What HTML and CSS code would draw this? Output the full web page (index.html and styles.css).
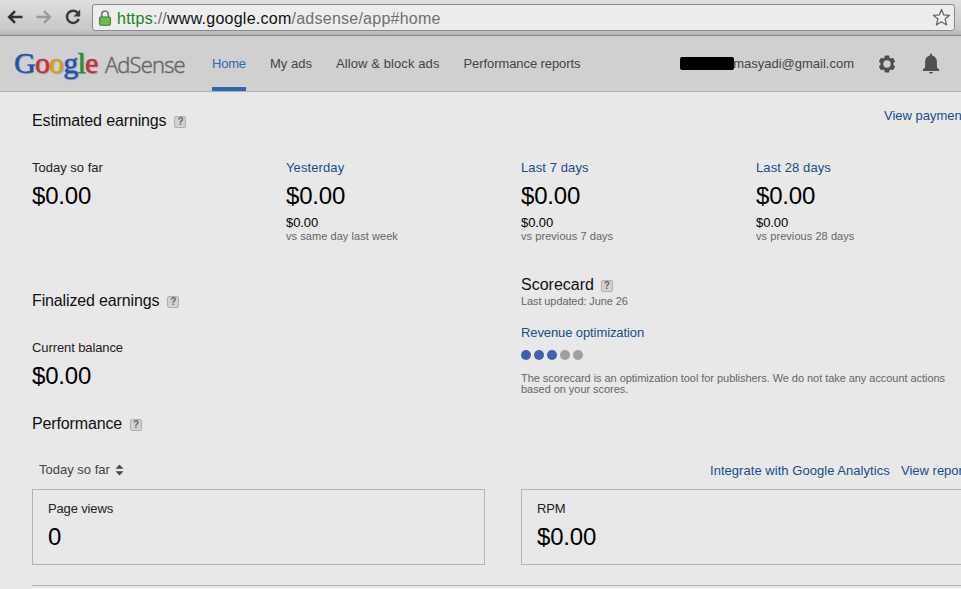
FILE: index.html
```html
<!DOCTYPE html>
<html lang="en">
<head>
<meta charset="utf-8">
<title>Google AdSense</title>
<link rel="stylesheet" href="styles.css">
</head>
<body>
<div class="toolbar">
  <svg class="nav-icon" width="16" height="16" viewBox="0 0 16 16"><path d="M15.500 8H2.500M8 2.200 2.200 8 8 13.800" fill="none" stroke="#333" stroke-width="2.600"/></svg>
  <svg class="nav-icon" width="16" height="16" viewBox="0 0 16 16"><path d="M.5 8h13M8 2.200 13.800 8 8 13.800" fill="none" stroke="#999" stroke-width="2.400"/></svg>
  <svg class="nav-icon" width="16" height="16" viewBox="0 0 16 16"><path d="M13 4.200A6.100 6.100 0 1 0 13.800 10" fill="none" stroke="#3a3a3a" stroke-width="2.500"/><path d="M15.200.6v6.800H8.400z" fill="#3a3a3a"/></svg>
  <div class="address">
    <svg class="lock" width="12" height="16" viewBox="0 0 12 16"><path d="M2.700 8V4.300a3.300 3.300 0 0 1 6.600 0V8" fill="none" stroke="#777" stroke-width="1.700"/><rect x=".5" y="6.900" width="11" height="8.400" rx="1" fill="#62b742" stroke="#42852f"/><path d="M2 9.200h8M2 11.200h8M2 13.200h8" stroke="#80c965" stroke-width=".8"/></svg>
    <span class="url"><span class="scheme">https</span><span class="path">://</span>www.google.com<span class="path">/adsense/app#home</span></span>
    <svg class="star" width="19" height="19" viewBox="0 0 19 19"><path d="m9.500 1.400 2.200 5.500 5.900.4-4.500 3.800 1.500 5.900-5.100-3.200-5.100 3.200 1.500-5.900L1.400 7.300l5.900-.4z" fill="#f4f4f4" stroke="#666" stroke-width="1.300" stroke-linejoin="round"/></svg>
  </div>
</div>
<header class="header">
  <div class="logo"><span class="google"><span class="blue">G</span><span class="red">o</span><span class="yellow">o</span><span class="blue">g</span><span class="green">l</span><span class="red">e</span></span><span class="product">AdSense</span></div>
  <nav class="tabs">
    <a class="tab active">Home</a>
    <a class="tab">My ads</a>
    <a class="tab wide">Allow &amp; block ads</a>
    <a class="tab narrow">Performance reports</a>
  </nav>
  <div class="account"><span class="redacted"></span><span>masyadi@gmail.com</span></div>
  <svg class="gear" width="18" height="18" viewBox="0 0 18 18"><path fill="#505050" fill-rule="evenodd" d="m6.800.5-.4 2.200-1.300.8L3 2.700.8 6.500 2.500 8v2L.8 11.500 3 15.300l2.100-.8 1.300.8.4 2.200h4.400l.4-2.200 1.300-.8 2.100.8 2.200-3.800-1.700-1.500V8l1.700-1.500L15 2.700l-2.100.8-1.300-.8-.4-2.200zM9 5.300a3.700 3.700 0 1 1 0 7.400 3.700 3.700 0 0 1 0-7.400z"/></svg>
  <svg class="bell" width="18" height="22" viewBox="0 0 18 22"><path fill="#505050" d="M8 .8h2v1.700c3.200.7 4.900 3 4.900 6v5.800l2.300 2.400v1.300H.8v-1.300l2.300-2.400V8.500c0-3 1.700-5.300 4.900-6zM7 19h4c-.4 2.300-3.600 2.300-4 0z"/></svg>
</header>
<main class="main">
  <a class="link payments">View payments</a>
  <section class="earnings">
    <h2 class="title estimated">Estimated earnings <i class="help">?</i></h2>
    <div class="stats">
      <div class="stat"><div class="label">Today so far</div><div class="amount">$0.00</div></div>
      <div class="stat"><a class="label link period">Yesterday</a><div class="amount">$0.00</div><div class="previous">$0.00</div><div class="note">vs same day last week</div></div>
      <div class="stat"><a class="label link period">Last 7 days</a><div class="amount">$0.00</div><div class="previous">$0.00</div><div class="note">vs previous 7 days</div></div>
      <div class="stat"><a class="label link period">Last 28 days</a><div class="amount">$0.00</div><div class="previous">$0.00</div><div class="note">vs previous 28 days</div></div>
    </div>
  </section>
  <div class="columns">
    <section class="finalized">
      <h2 class="title">Finalized earnings <i class="help">?</i></h2>
      <div class="stat balance"><div class="label">Current balance</div><div class="amount">$0.00</div></div>
    </section>
    <section class="scorecard">
      <h2 class="title scorecard-title">Scorecard <i class="help">?</i></h2>
      <div class="note updated">Last updated: June 26</div>
      <a class="link revenue">Revenue optimization</a>
      <div class="dots"><i class="dot on"></i><i class="dot on"></i><i class="dot on"></i><i class="dot"></i><i class="dot"></i></div>
      <p class="explain">The scorecard is an optimization tool for publishers. We do not take any account actions<br>based on your scores.</p>
    </section>
  </div>
  <section class="performance">
    <h2 class="title">Performance <i class="help">?</i></h2>
    <div class="controls">
      <span class="range">Today so far<svg width="9" height="12" viewBox="0 0 9 12"><path d="M4.500.5 8.500 4.800h-8zM.5 7.200h8l-4 4.300z" fill="#484848"/></svg></span>
      <a class="link analytics">Integrate with Google Analytics</a><a class="link reports">View reports</a>
    </div>
    <div class="cards">
      <div class="card"><div class="label">Page views</div><div class="amount">0</div></div>
      <div class="card"><div class="label">RPM</div><div class="amount">$0.00</div></div>
    </div>
  </section>
</main>
</body>
</html>
```
FILE: styles.css
```css
* { box-sizing: border-box; }
body {
  margin: 0;
  height: 589px;
  overflow: hidden;
  background: #e8e8e8;
  color: #222;
  font: 13px/16px "Liberation Sans", Arial, sans-serif;
  white-space: nowrap;
}
.toolbar {
  display: flex;
  align-items: center;
  height: 36px;
  padding: 0 6px 1px 7px;
  background: linear-gradient(#dedede, #c8c8c8 85%, #b4b4b4);
  border-bottom: 1px solid #858585;
}
.nav-icon { flex: none; margin-right: 13px; }
.nav-icon:nth-child(3) { margin-right: 11px; }
.address {
  display: flex;
  align-items: center;
  flex: 1;
  height: 27px;
  padding: 0 3px 0 6px;
  background: #ededed;
  border: 1px solid #898989;
  border-radius: 3px;
}
.lock { margin: 1px 6px 0 0; }
.url { flex: 1; padding-top: 3px; font-size: 16px; letter-spacing: .25px; color: #111; }
.star { margin-top: 1px; }
.scheme { color: #19821d; }
.path { color: #707070; }
.header {
  display: flex;
  height: 56px;
  align-items: center;
  background: #d0d0d0;
  border-bottom: 1px solid #b2b2b2;
  color: #444;
}
.logo {
  display: flex;
  align-items: baseline;
  width: 197px;
  padding: 0 0 0 14px;
  line-height: 34px;
}
.google { width: 91px; font-family: "Liberation Serif", serif; font-size: 30px; letter-spacing: -.8px; -webkit-text-stroke: .5px; text-shadow: 1px 1px 1px #999; }
.blue { color: #2450b8; }
.red { color: #c52c3c; }
.yellow { color: #d99b1a; }
.green { color: #23913a; }
.product { font: 300 22px/34px "Open Sans", sans-serif; letter-spacing: -.85px; color: #686868; -webkit-text-stroke: .5px; }
.tabs { display: flex; gap: 24px; width: 385px; height: 55px; padding-left: 15px; align-self: flex-start; }
.tab { height: 55px; line-height: 55px; }
.tab.active { width: 34px; letter-spacing: -.2px; color: #3264b4; border-bottom: 4px solid #3264b4; }
.tab.wide { letter-spacing: .1px; }
.tab.narrow { letter-spacing: -.08px; }
.account { display: flex; align-items: center; width: 174px; margin-left: 98px; }
.redacted { width: 55px; height: 13px; margin-right: -1px; background: #000; border-radius: 2px; }
.gear { margin-left: 24px; }
.bell { margin-left: 26px; }
.main { position: relative; padding: 19px 0 0 32px; }
.link { color: #174c88; }
.payments { position: absolute; left: 884px; top: 16px; }
.title {
  display: flex;
  align-items: center;
  gap: 8px;
  margin: 0;
  font-size: 16px;
  font-weight: 400;
  line-height: 20px;
  letter-spacing: -.14px;
  color: #111;
}
.scorecard-title { gap: 7px; letter-spacing: 0; }
.help {
  width: 12px;
  height: 12px;
  margin-top: 1px;
  border: 1px solid #b0b0b0;
  border-radius: 2px;
  background: #d2d2d2;
  color: #666;
  font: bold 10px/10px "Liberation Sans", Arial, sans-serif;
  letter-spacing: 0;
  text-align: center;
}
.stats { display: grid; grid-template-columns: 254px 235px 235px 1fr; height: 115px; margin-top: 29px; }
.label { display: block; line-height: 16px; }
.period { letter-spacing: .1px; }
.amount { margin-top: 6px; font-size: 24px; line-height: 28px; letter-spacing: -.2px; color: #000; }
.previous { margin-top: 6px; line-height: 14px; letter-spacing: -.1px; color: #000; }
.note { margin-top: -1px; font-size: 11px; line-height: 14px; letter-spacing: .06px; color: #666; }
.columns { display: grid; grid-template-columns: 489px 1fr; height: 139px; }
.finalized { padding-top: 16px; }
.balance { margin-top: 29px; }
.balance .label { letter-spacing: -.1px; }
.updated { letter-spacing: -.1px; }
.revenue { display: block; margin-top: 17px; letter-spacing: -.1px; }
.dots { display: flex; gap: 3px; margin: 9px 0 13px; }
.dot { width: 10px; height: 10px; border-radius: 50%; background: #a0a0a0; }
.dot.on { background: #405fb2; }
.explain { margin: 0; font-size: 11px; line-height: 11px; letter-spacing: -.05px; color: #666; }
.controls { display: flex; margin: 28px 0 11px; padding-left: 7px; }
.range { display: flex; flex: none; align-items: center; gap: 5px; width: 671px; color: #444; }
.analytics { flex: none; width: 191px; letter-spacing: .04px; }
.reports { flex: none; }
.controls .link { height: 16px; line-height: 18px; }
.cards { display: grid; grid-template-columns: 453px 453px; gap: 36px; padding-bottom: 20px; border-bottom: 1px solid #b4b4b4; }
.card { height: 76px; padding: 11px 15px; border: 1px solid #b4b4b4; }
.card .label { letter-spacing: -.15px; }
```
